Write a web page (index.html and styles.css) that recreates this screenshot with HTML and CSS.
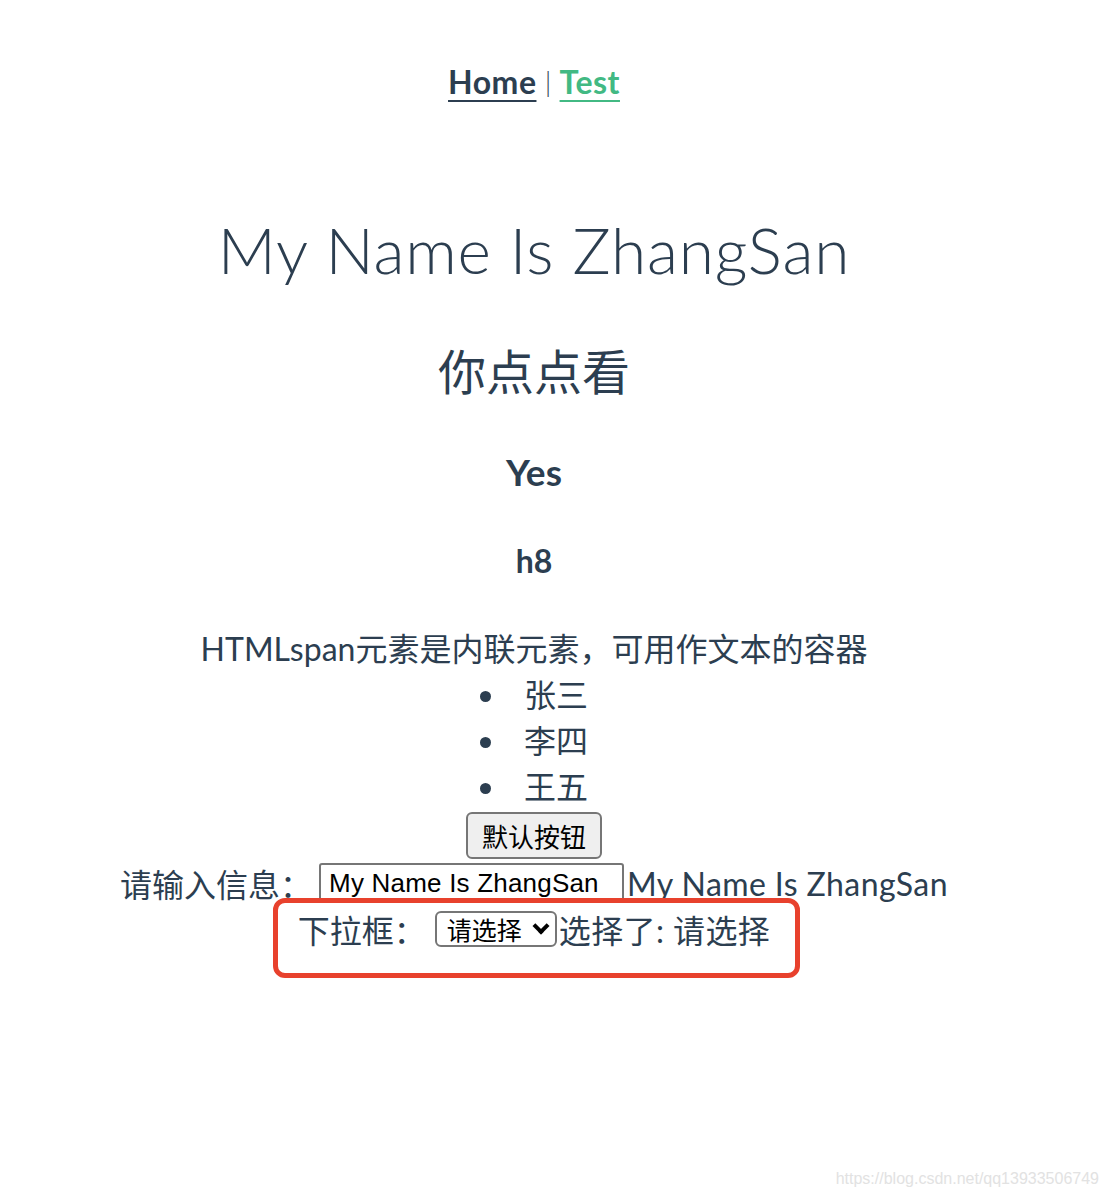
FILE: index.html
```html
<!DOCTYPE html>
<html lang="zh-CN">
<head>
<meta charset="utf-8">
<title>Vue App</title>
<link rel="stylesheet" href="styles.css">
</head>
<body>
<div class="app">
  <nav class="nav">
    <a href="#" class="nav-link">Home</a> <span class="sep">|</span> <a href="#" class="nav-link active">Test</a>
  </nav>
  <h1 class="title">My Name Is ZhangSan</h1>
  <h2 class="subtitle">你点点看</h2>
  <h3 class="yes">Yes</h3>
  <h4 class="h8">h8</h4>
  <div class="desc"><span>HTMLspan元素是内联元素，可用作文本的容器</span></div>
  <ul class="names">
    <li>张三</li>
    <li>李四</li>
    <li>王五</li>
  </ul>
  <div class="row btn-row"><button class="btn" type="button">默认按钮</button></div>
  <div class="row input-row">
    <label class="label" for="info">请输入信息：</label>
    <input id="info" class="text-input" type="text" value="My Name Is ZhangSan">
    <span class="echo">My Name Is ZhangSan</span>
  </div>
  <div class="row select-row">
    <span class="label">下拉框：</span>
    <span class="select" role="combobox" aria-expanded="false"><span class="select-text">请选择</span><span class="chev"></span></span>
    <span class="echo">选择了: 请选择</span>
  </div>
  <div class="highlight"></div>
</div>
<div class="watermark">https://blog.csdn.net/qq13933506749</div>
</body>
</html>
```
FILE: styles.css
```css
html, body {
  margin: 0;
  padding: 0;
  background: #ffffff;
}
body {
  height: 1196px;
  position: relative;
  overflow: hidden;
}
.app {
  position: relative;
  margin: 0 56px 0 16px;
  text-align: center;
  color: #2c3e50;
  font-family: "Lato", "Noto Sans CJK SC", sans-serif;
  font-size: 32px;
  -webkit-font-smoothing: antialiased;
}
.nav {
  padding-top: 60px;
  height: 44px;
  line-height: 44px;
  font-size: 32px;
}
.sep {
  font-weight: 300;
  font-size: 28px;
  position: relative;
  top: -2px;
}
.nav-link {
  color: #2c3e50;
  font-weight: 700;
  letter-spacing: 0.5px;
  text-decoration: underline;
  text-underline-offset: 6px;
  text-decoration-thickness: 2px;
}
.nav-link.active {
  color: #42b983;
}
.title {
  margin: 102px 0 0;
  font-size: 64px;
  line-height: 88px;
  font-weight: 300;
  letter-spacing: 0.8px;
}
.subtitle {
  margin: 46px 0 0;
  font-size: 48px;
  line-height: 64px;
  font-weight: 400;
}
.yes {
  margin: 43px 0 0;
  font-size: 37px;
  line-height: 50px;
  font-weight: 700;
}
.h8 {
  margin: 42px 0 0;
  font-size: 32px;
  line-height: 44px;
  font-weight: 700;
}
.desc {
  margin-top: 43px;
  line-height: 46px;
}
.names {
  margin: 0;
  padding: 0;
  list-style: disc inside;
}
.names li {
  line-height: 46px;
}
.row {
  display: flex;
  justify-content: center;
  align-items: center;
}
.btn-row {
  height: 50px;
}
.btn {
  height: 47px;
  padding: 0 14px;
  font-family: "Noto Sans CJK SC", sans-serif;
  font-size: 26px;
  color: #000;
  background: #efefef;
  border: 2px solid #767676;
  border-radius: 6px;
}
.input-row {
  height: 46px;
}
.select-row {
  height: 46px;
}
.label {
  margin-right: 7px;
}
.select-row .label {
  margin-right: 9px;
}
.echo {
  letter-spacing: 0.4px;
}
.text-input {
  box-sizing: border-box;
  width: 305px;
  height: 40px;
  margin: 0 3px 0 0;
  padding: 0 8px;
  font-family: "Liberation Sans", Arial, sans-serif;
  font-size: 26px;
  letter-spacing: 0.2px;
  color: #000;
  border: 2px solid #767676;
  border-radius: 3px;
  background: #fff;
}
.select {
  box-sizing: border-box;
  display: inline-flex;
  align-items: center;
  width: 122px;
  height: 36px;
  margin-right: 2px;
  padding: 0 0 0 10px;
  font-family: "Noto Sans CJK SC", sans-serif;
  font-size: 25px;
  line-height: 32px;
  color: #000;
  background: #fff;
  border: 2px solid #767676;
  border-radius: 6px;
  cursor: default;
}
.select-text {
  display: block;
}
.chev {
  display: block;
  width: 8px;
  height: 8px;
  margin: -6px 0 0 13px;
  border-right: 4px solid #000;
  border-bottom: 4px solid #000;
  transform: rotate(45deg);
}
.highlight {
  position: absolute;
  left: 257px;
  top: 898px;
  width: 517px;
  height: 70px;
  border: 5px solid #e8412d;
  border-radius: 12px;
}
.watermark {
  position: absolute;
  right: 9px;
  bottom: 8px;
  font-family: "Liberation Sans", Arial, sans-serif;
  font-size: 16px;
  color: #e2e2e2;
}
```
